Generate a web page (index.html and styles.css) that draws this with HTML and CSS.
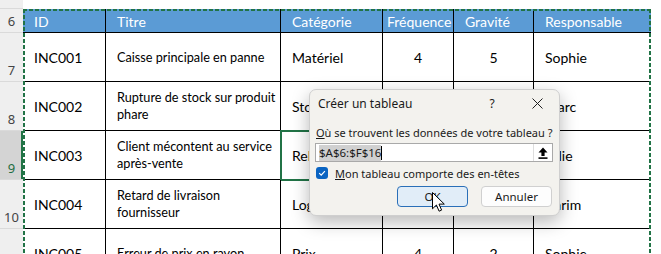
FILE: index.html
```html
<!DOCTYPE html>
<html lang="fr">
<head>
  <meta charset="UTF-8">
  <title>Créer un tableau</title>
  <link rel="stylesheet" href="styles.css">
</head>
<body>
  <div class="sheet">
    <div class="rowheads">
      <div class="rh rh-top">5</div>
      <div class="rh rh-head">6</div>
      <div class="rh">7</div>
      <div class="rh">8</div>
      <div class="rh rh-sel">9</div>
      <div class="rh">10</div>
      <div class="rh">11</div>
    </div>

    <div class="cells">
      <div class="row5"></div>
      <div class="range">
        <div class="grid">
          <div class="c h">ID</div>
          <div class="c h">Titre</div>
          <div class="c h">Catégorie</div>
          <div class="c h h-tight">Fréquence</div>
          <div class="c h">Gravité</div>
          <div class="c h">Responsable</div>

          <div class="c">INC001</div>
          <div class="c t">Caisse principale en panne</div>
          <div class="c">Matériel</div>
          <div class="c n">4</div>
          <div class="c n">5</div>
          <div class="c">Sophie</div>

          <div class="c">INC002</div>
          <div class="c t">Rupture de stock sur produit phare</div>
          <div class="c">Stock</div>
          <div class="c n">3</div>
          <div class="c n">4</div>
          <div class="c">Marc</div>

          <div class="c">INC003</div>
          <div class="c t">Client mécontent au service après-vente</div>
          <div class="c sel">Relation</div>
          <div class="c n">2</div>
          <div class="c n">3</div>
          <div class="c">Julie</div>

          <div class="c">INC004</div>
          <div class="c t">Retard de livraison fournisseur</div>
          <div class="c">Logistique</div>
          <div class="c n">3</div>
          <div class="c n">4</div>
          <div class="c">Karim</div>

          <div class="c">INC005</div>
          <div class="c t">Erreur de prix en rayon</div>
          <div class="c">Prix</div>
          <div class="c n">4</div>
          <div class="c n">2</div>
          <div class="c">Sophie</div>
        </div>
      </div>
    </div>
  </div>

  <div class="dialog">
    <div class="dlg-title">
      <span class="dlg-name">Créer un tableau</span>
      <span class="dlg-help">?</span>
      <span class="dlg-close">
        <svg width="11" height="11" viewBox="0 0 11 11"><path d="M0.5 0.5 L10.5 10.5 M10.5 0.5 L0.5 10.5" stroke="#1f1f1f" stroke-width="1"/></svg>
      </span>
    </div>
    <div class="dlg-body">
      <div class="dlg-label"><u>O</u>ù se trouvent les données de votre tableau ?</div>
      <div class="ref-box">
        <span class="ref-text"><span class="ref-sel">$A$6:$F$16</span><span class="caret"></span></span>
        <span class="ref-btn">
          <svg width="10" height="12" viewBox="0 0 10 12"><path d="M5 0.5 L9.5 5.5 H6.6 V9 H3.4 V5.5 H0.5 Z" fill="#000"/><rect x="0.5" y="10.3" width="9" height="1.6" fill="#000"/></svg>
        </span>
      </div>
      <div class="check">
        <span class="box">
          <svg width="12" height="12" viewBox="0 0 12 12"><path d="M3.2 6.2 L5.2 8.2 L8.9 4.2" fill="none" stroke="#fff" stroke-width="1.2"/></svg>
        </span>
        <span><u>M</u>on tableau comporte des en-têtes</span>
      </div>
      <div class="dlg-actions">
        <button class="btn btn-ok">OK</button>
        <button class="btn">Annuler</button>
      </div>
    </div>
  </div>

  <svg class="cursor" width="13" height="21" viewBox="0 0 13 21">
    <path d="M0.5 0.5 V16.8 L4.4 13 L7.1 19.2 L9.6 18.1 L7 12.1 H12.3 Z" fill="#fff" stroke="#000" stroke-width="1" stroke-linejoin="round"/>
  </svg>
</body>
</html>
```

FILE: styles.css
```css
body {
  margin: 0;
  width: 661px;
  height: 254px;
  overflow: hidden;
  background: #fff;
  font-family: Lato, "Liberation Sans", sans-serif;
}

.sheet {
  display: flex;
}

.rowheads {
  width: 23px;
  flex: none;
  display: flex;
  flex-direction: column;
}

.rh {
  box-sizing: border-box;
  height: 49px;
  flex: none;
  background: #efefef;
  border-bottom: 1px solid #dadada;
  color: #444;
  font-family: "Noto Sans", sans-serif;
  font-size: 13px;
  line-height: 1;
  display: flex;
  align-items: flex-end;
  justify-content: center;
  padding-bottom: 4px;
  overflow: hidden;
}

.rh-top {
  height: 9px;
  padding-bottom: 6px;
}

.rh-head {
  height: 24px;
}

.rh-sel {
  background: #d4d4d4;
  color: #1e6e42;
  box-shadow: inset -2px 0 0 #217346;
}

.cells {
  flex: 1;
}

.row5 {
  height: 9px;
}

.range {
  position: relative;
  width: 628px;
}

.range::after {
  content: "";
  position: absolute;
  inset: 0;
  pointer-events: none;
  background:
    repeating-linear-gradient(90deg, #217346 0 4px, transparent 4px 6px) top / 100% 2px no-repeat,
    repeating-linear-gradient(180deg, #217346 0 4px, transparent 4px 6px) left / 2px 100% no-repeat,
    repeating-linear-gradient(180deg, #217346 0 4px, transparent 4px 6px) right / 2px 100% no-repeat;
}

.grid {
  display: grid;
  grid-template-columns: 83px 175px 102px 71px 80px 117px;
  grid-template-rows: 24px repeat(5, 49px);
}

.c {
  box-sizing: border-box;
  border-right: 1px solid #000;
  border-bottom: 1px solid #000;
  display: flex;
  align-items: center;
  padding: 0 4px 0 11px;
  font-size: 14px;
  color: #000;
  white-space: nowrap;
  overflow: hidden;
}

.c:nth-child(6n) {
  border-right: none;
}

.h {
  background: #5b9bd5;
  color: #fff;
  padding-top: 1px;
}

.h-tight {
  padding-left: 4px;
}

.t {
  font-size: 12.7px;
  line-height: 17px;
  white-space: normal;
  padding-right: 0;
}

.n {
  justify-content: center;
  padding: 0;
}

.sel {
  outline: 2px solid #217346;
  outline-offset: -1px;
}

.dialog {
  position: absolute;
  left: 309px;
  top: 89px;
  width: 251px;
  box-sizing: border-box;
  background: #f3f2ee;
  border: 1px solid #cfcfcf;
  border-radius: 7px;
  box-shadow: 0 6px 18px rgba(0, 0, 0, 0.28);
  font-family: "Noto Sans", sans-serif;
  font-size: 11px;
  color: #1a1a1a;
}

.dlg-title {
  height: 27px;
  display: flex;
  align-items: center;
  padding: 0 7px 0 8px;
  font-size: 12px;
}

.dlg-name {
  flex: 1;
}

.dlg-help {
  width: 20px;
  text-align: center;
  margin-right: 20px;
}

.dlg-close {
  width: 30px;
  display: flex;
  justify-content: center;
}

.dlg-body {
  padding: 8px 6px 8px 5px;
}

.dlg-label {
  height: 16px;
  line-height: 16px;
  padding-left: 1px;
  white-space: nowrap;
}

.ref-box {
  margin-top: 2px;
  height: 19px;
  box-sizing: border-box;
  background: #fff;
  border: 1px solid #a9a9a9;
  display: flex;
  align-items: center;
  font-size: 11.5px;
}

.ref-text {
  flex: 1;
  display: flex;
  align-items: center;
  padding-left: 3px;
}

.ref-sel {
  background: #d0d0d0;
  line-height: 16px;
}

.caret {
  width: 1px;
  height: 14px;
  background: #000;
}

.ref-btn {
  width: 19px;
  height: 17px;
  box-sizing: border-box;
  border-left: 1px solid #dedede;
  display: flex;
  align-items: center;
  justify-content: center;
}

.check {
  margin-top: 3px;
  height: 16px;
  display: flex;
  align-items: center;
  gap: 7px;
  padding-left: 1px;
}

.box {
  width: 12px;
  height: 12px;
  border-radius: 3px;
  background: #0a64c2;
  display: flex;
}

.dlg-actions {
  margin-top: 5px;
  display: flex;
  justify-content: flex-end;
  gap: 13px;
  padding-right: 1px;
}

.btn {
  width: 71px;
  height: 21px;
  box-sizing: border-box;
  border: 1px solid #d0d0d0;
  border-radius: 4px;
  background: #fdfdfd;
  font-family: "Noto Sans", sans-serif;
  font-size: 11.5px;
  color: #1a1a1a;
  padding: 0;
}

.btn-ok {
  background: #e1edf8;
  border: 1.5px solid #2a6fb8;
}

.cursor {
  position: absolute;
  left: 432px;
  top: 192px;
}
```
